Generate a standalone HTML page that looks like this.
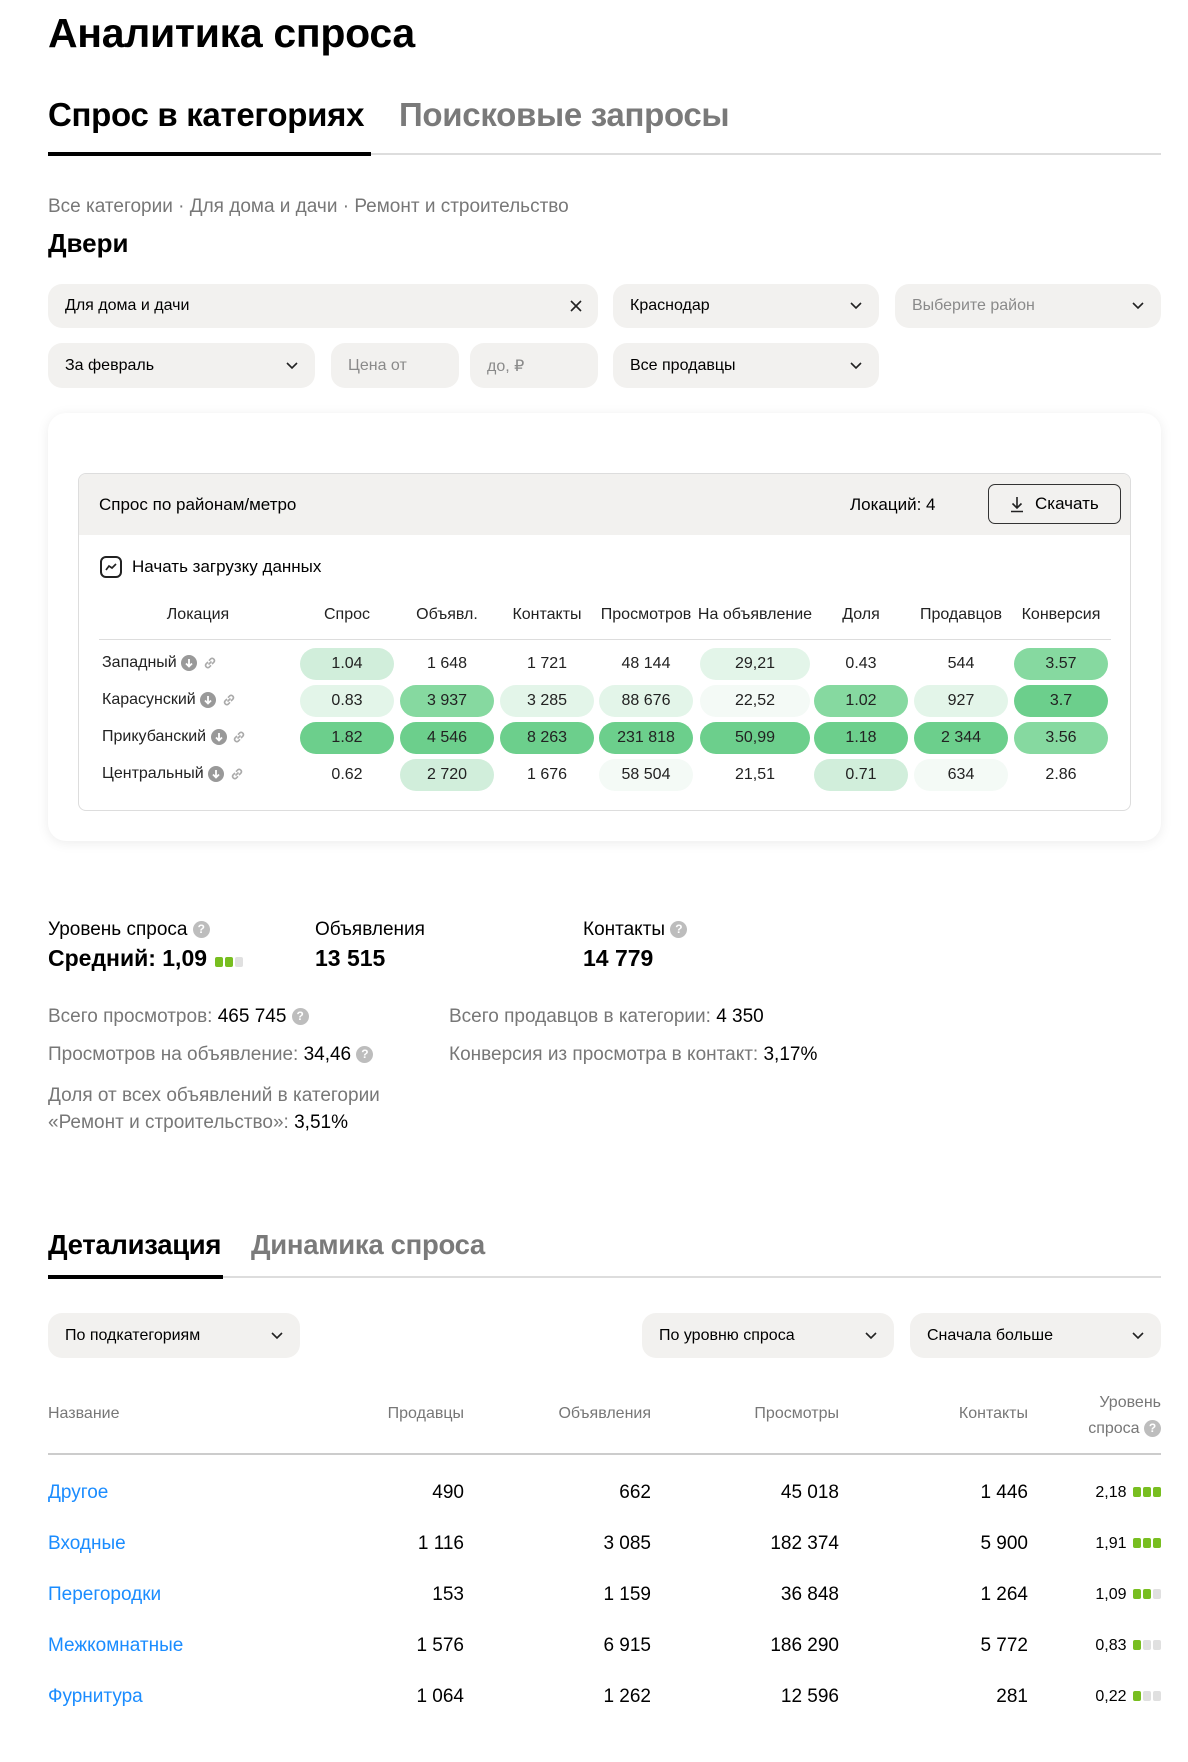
<!DOCTYPE html>
<html><head><meta charset="utf-8"><style>
*{box-sizing:border-box;margin:0;padding:0}
body{width:1188px;height:1762px;background:#fff;font-family:"Liberation Sans","DejaVu Sans",sans-serif;color:#000;position:relative;overflow:hidden}
.a{position:absolute;white-space:nowrap}
.f{position:absolute;background:#f2f1ef;border-radius:14px;font-size:16px;display:flex;align-items:center;padding-left:17px}
.f svg{position:absolute;right:16px;top:50%;margin-top:-6px}
.ph{color:#8a8a8a}
.cell{position:absolute;height:32px;border-radius:16px;font-size:16px;display:flex;align-items:center;justify-content:center;color:#222}
.th{position:absolute;font-size:16px;color:#222;transform:translateX(-50%);top:606px}
.g1{background:#6ccf8c}.g2{background:#86d9a0}.g3{background:#d1eedb}.g4{background:#e3f5e9}.g5{background:#f4faf6}
.q{display:inline-block;width:17px;height:17px;border-radius:50%;background:#bdbdbd;color:#fff;font-size:12px;font-weight:bold;text-align:center;line-height:17px;vertical-align:middle}
.gr{color:#777}
.dots{display:inline-block;vertical-align:middle}
.dots i{display:inline-block;width:8px;height:10px;border-radius:2px;background:#78be20;margin-left:2px}
.dots i.o{background:#e0e0e0}
.lk{color:#1a8cff}
</style></head><body>
<div class="a" style="left:48px;top:10px;font-size:41px;font-weight:bold;letter-spacing:-0.3px">Аналитика спроса</div>
<div class="a" style="left:48px;top:96px;font-size:33px;font-weight:bold;letter-spacing:-0.3px">Спрос в категориях</div>
<div class="a" style="left:399px;top:96px;font-size:33px;font-weight:bold;color:#7a7a7a;letter-spacing:-0.3px">Поисковые запросы</div>
<div class="a" style="left:48px;top:153px;width:1113px;height:2px;background:#ddd"></div>
<div class="a" style="left:48px;top:152px;width:323px;height:4px;background:#000"></div>
<div class="a gr" style="left:48px;top:196px;font-size:19px">Все категории · Для дома и дачи · Ремонт и строительство</div>
<div class="a" style="left:48px;top:228px;font-size:26px;font-weight:bold">Двери</div>

<div class="f" style="left:48px;top:284px;width:550px;height:44px">Для дома и дачи<svg width="12" height="12" viewBox="0 0 12 12"><path d="M1 1L11 11M11 1L1 11" stroke="#222" stroke-width="1.6"/></svg></div>
<div class="f" style="left:613px;top:284px;width:266px;height:44px">Краснодар<svg width="14" height="12" viewBox="0 0 14 12"><path d="M2 3L7 8L12 3" stroke="#222" stroke-width="1.6" fill="none"/></svg></div>
<div class="f ph" style="left:895px;top:284px;width:266px;height:44px">Выберите район<svg width="14" height="12" viewBox="0 0 14 12"><path d="M2 3L7 8L12 3" stroke="#222" stroke-width="1.6" fill="none"/></svg></div>
<div class="f" style="left:48px;top:343px;width:267px;height:45px">За февраль<svg width="14" height="12" viewBox="0 0 14 12"><path d="M2 3L7 8L12 3" stroke="#222" stroke-width="1.6" fill="none"/></svg></div>
<div class="f ph" style="left:331px;top:343px;width:128px;height:45px">Цена от</div>
<div class="f ph" style="left:470px;top:343px;width:128px;height:45px">до, ₽</div>
<div class="f" style="left:613px;top:343px;width:266px;height:45px">Все продавцы<svg width="14" height="12" viewBox="0 0 14 12"><path d="M2 3L7 8L12 3" stroke="#222" stroke-width="1.6" fill="none"/></svg></div>

<div class="a" style="left:48px;top:413px;width:1113px;height:428px;border-radius:18px;background:#fff;box-shadow:0 2px 12px rgba(0,0,0,0.08)"></div>
<div class="a" style="left:78px;top:473px;width:1053px;height:338px;border:1px solid #ddd;border-radius:8px;overflow:hidden">
 <div style="height:61px;background:#f2f1ef"></div>
</div>
<div class="a" style="left:99px;top:495px;font-size:17px">Спрос по районам/метро</div>
<div class="a" style="left:850px;top:495px;font-size:17px">Локаций: 4</div>
<div class="a" style="left:988px;top:484px;width:133px;height:40px;border:1.3px solid #333;border-radius:7px;font-size:17px;display:flex;align-items:center;padding-left:20px"><svg width="16" height="18" viewBox="0 0 16 18" style="margin-right:10px"><path d="M8 2V13M3.5 8.5L8 13L12.5 8.5M2 16.5H14" stroke="#222" stroke-width="1.6" fill="none"/></svg>Скачать</div>
<div class="a" style="left:100px;top:556px;width:22px;height:22px;border:2px solid #222;border-radius:6px"><svg width="18" height="18" viewBox="0 0 18 18" style="position:absolute;left:0;top:0"><path d="M4 12L7 8L10 10L14 6" stroke="#222" stroke-width="1.7" fill="none"/></svg></div>
<div class="a" style="left:132px;top:557px;font-size:17px">Начать загрузку данных</div>

<div class="th" style="left:198px">Локация</div>
<div class="th" style="left:347px">Спрос</div>
<div class="th" style="left:447px">Объявл.</div>
<div class="th" style="left:547px">Контакты</div>
<div class="th" style="left:646px">Просмотров</div>
<div class="th" style="left:755px">На объявление</div>
<div class="th" style="left:861px">Доля</div>
<div class="th" style="left:961px">Продавцов</div>
<div class="th" style="left:1061px">Конверсия</div>
<div class="a" style="left:99px;top:639px;width:1012px;height:1px;background:#ddd"></div>

<div id="rows"></div>
<script>
var loc=["Западный","Карасунский","Прикубанский","Центральный"];
var cx=[347,447,547,646,755,861,961,1061];
var d=[
[["1.04","g3"],["1 648",""],["1 721",""],["48 144",""],["29,21","g4"],["0.43",""],["544",""],["3.57","g2"]],
[["0.83","g4"],["3 937","g2"],["3 285","g4"],["88 676","g4"],["22,52","g5"],["1.02","g2"],["927","g4"],["3.7","g1"]],
[["1.82","g1"],["4 546","g1"],["8 263","g1"],["231 818","g1"],["50,99","g1"],["1.18","g1"],["2 344","g1"],["3.56","g2"]],
[["0.62",""],["2 720","g3"],["1 676",""],["58 504","g5"],["21,51",""],["0.71","g3"],["634","g5"],["2.86",""]]];
var h="";
for(var r=0;r<4;r++){var y=648+r*37;
h+='<div class="a" style="left:102px;top:'+(y+6)+'px;font-size:16px;color:#222">'+loc[r]+' <svg width="16" height="16" viewBox="0 0 16 16" style="vertical-align:middle"><circle cx="8" cy="8" r="8" fill="#999"/><path d="M8 4V11M5 8.5L8 11.5L11 8.5" stroke="#fff" stroke-width="1.8" fill="none"/></svg> <svg width="16" height="16" viewBox="0 0 16 16" style="vertical-align:middle"><path d="M6.5 9.5L9.5 6.5M6 7L4 9a2.3 2.3 0 0 0 3.2 3.2L9 10.3M10 9L12 7a2.3 2.3 0 0 0-3.2-3.2L7 5.7" stroke="#aaa" stroke-width="1.6" fill="none"/></svg></div>';
for(var c=0;c<8;c++){var w=(c==4)?110:94;
h+='<div class="cell '+d[r][c][1]+'" style="left:'+(cx[c]-w/2)+'px;top:'+y+'px;width:'+w+'px">'+d[r][c][0]+'</div>';}}
document.getElementById('rows').innerHTML=h;
</script>

<div class="a" style="left:48px;top:919px;font-size:19px">Уровень спроса <span class="q">?</span></div>
<div class="a" style="left:48px;top:945px;font-size:23px;font-weight:bold">Средний: 1,09 <span class="dots"><i></i><i></i><i class="o"></i></span></div>
<div class="a" style="left:315px;top:919px;font-size:19px">Объявления</div>
<div class="a" style="left:315px;top:945px;font-size:23px;font-weight:bold">13 515</div>
<div class="a" style="left:583px;top:919px;font-size:19px">Контакты <span class="q">?</span></div>
<div class="a" style="left:583px;top:945px;font-size:23px;font-weight:bold">14 779</div>

<div class="a gr" style="left:48px;top:1006px;font-size:19px">Всего просмотров: <span style="color:#000">465 745</span> <span class="q">?</span></div>
<div class="a gr" style="left:48px;top:1044px;font-size:19px">Просмотров на объявление: <span style="color:#000">34,46</span> <span class="q">?</span></div>
<div class="a gr" style="left:48px;top:1082px;font-size:19px;line-height:27px">Доля от всех объявлений в категории<br>«Ремонт и строительство»: <span style="color:#000">3,51%</span></div>
<div class="a gr" style="left:449px;top:1006px;font-size:19px">Всего продавцов в категории: <span style="color:#000">4 350</span></div>
<div class="a gr" style="left:449px;top:1044px;font-size:19px">Конверсия из просмотра в контакт: <span style="color:#000">3,17%</span></div>

<div class="a" style="left:48px;top:1229px;font-size:27.5px;font-weight:bold;letter-spacing:-0.3px">Детализация</div>
<div class="a" style="left:251px;top:1229px;font-size:27.5px;font-weight:bold;color:#7a7a7a;letter-spacing:-0.3px">Динамика спроса</div>
<div class="a" style="left:48px;top:1276px;width:1113px;height:2px;background:#ddd"></div>
<div class="a" style="left:48px;top:1275px;width:175px;height:4px;background:#000"></div>

<div class="f" style="left:48px;top:1313px;width:252px;height:45px">По подкатегориям<svg width="14" height="12" viewBox="0 0 14 12"><path d="M2 3L7 8L12 3" stroke="#222" stroke-width="1.6" fill="none"/></svg></div>
<div class="f" style="left:642px;top:1313px;width:252px;height:45px">По уровню спроса<svg width="14" height="12" viewBox="0 0 14 12"><path d="M2 3L7 8L12 3" stroke="#222" stroke-width="1.6" fill="none"/></svg></div>
<div class="f" style="left:910px;top:1313px;width:251px;height:45px">Сначала больше<svg width="14" height="12" viewBox="0 0 14 12"><path d="M2 3L7 8L12 3" stroke="#222" stroke-width="1.6" fill="none"/></svg></div>

<div class="a gr" style="left:48px;top:1405px;font-size:16px">Название</div>
<div class="a gr" style="right:724px;top:1405px;font-size:16px">Продавцы</div>
<div class="a gr" style="right:537px;top:1405px;font-size:16px">Объявления</div>
<div class="a gr" style="right:349px;top:1405px;font-size:16px">Просмотры</div>
<div class="a gr" style="right:160px;top:1405px;font-size:16px">Контакты</div>
<div class="a gr" style="right:27px;top:1390px;font-size:16px;text-align:right;line-height:26px">Уровень<br>спроса <span class="q">?</span></div>
<div class="a" style="left:48px;top:1453px;width:1113px;height:2px;background:#ccc"></div>

<div id="t2"></div>
<script>
var n=[["Другое","490","662","45 018","1 446","2,18",3],["Входные","1 116","3 085","182 374","5 900","1,91",3],["Перегородки","153","1 159","36 848","1 264","1,09",2],["Межкомнатные","1 576","6 915","186 290","5 772","0,83",1],["Фурнитура","1 064","1 262","12 596","281","0,22",1]];
var rr=[724,537,349,160],h2="";
for(var i=0;i<5;i++){var y=1482+i*51;
h2+='<div class="a lk" style="left:48px;top:'+y+'px;font-size:19px">'+n[i][0]+'</div>';
for(var j=0;j<4;j++)h2+='<div class="a" style="right:'+rr[j]+'px;top:'+y+'px;font-size:19px">'+n[i][j+1]+'</div>';
var dd='';for(var k=0;k<3;k++)dd+='<i'+(k<n[i][6]?'':' class="o"')+'></i>';
h2+='<div class="a" style="right:27px;top:'+(y+2)+'px;font-size:16px">'+n[i][5]+' <span class="dots">'+dd+'</span></div>';}
document.getElementById('t2').innerHTML=h2;
</script>
</body></html>
